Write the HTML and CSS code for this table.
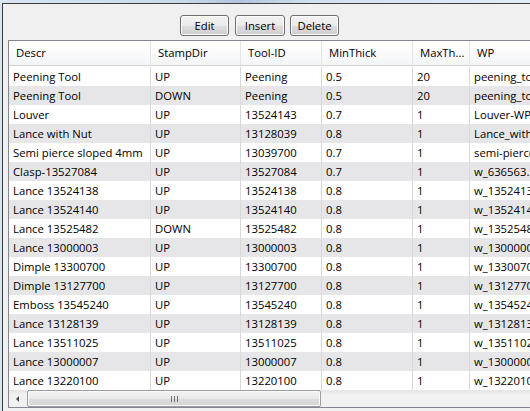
FILE: index.html
```html
<!DOCTYPE html>
<html>
<head>
<meta charset="utf-8">
<link rel="stylesheet" href="styles.css">
</head>
<body>
<div class="frame">
  <div class="panel">
    <div class="toolbar">
      <button class="btn btn-edit">Edit</button>
      <button class="btn btn-insert">Insert</button>
      <button class="btn btn-delete">Delete</button>
    </div>
    <div class="grid">
      <div class="row head">
        <div class="cell">Descr</div>
        <div class="cell">StampDir</div>
        <div class="cell">Tool-ID</div>
        <div class="cell">MinThick</div>
        <div class="cell">MaxTh...</div>
        <div class="cell">WP</div>
      </div>
      <div class="body">
        <div class="row"><div class="cell">Peening Tool</div><div class="cell">UP</div><div class="cell">Peening</div><div class="cell">0.5</div><div class="cell">20</div><div class="cell">peening_tool_wp</div></div>
        <div class="row alt"><div class="cell">Peening Tool</div><div class="cell">DOWN</div><div class="cell">Peening</div><div class="cell">0.5</div><div class="cell">20</div><div class="cell">peening_tool_wp</div></div>
        <div class="row"><div class="cell">Louver</div><div class="cell">UP</div><div class="cell">13524143</div><div class="cell">0.7</div><div class="cell">1</div><div class="cell">Louver-WP</div></div>
        <div class="row alt"><div class="cell">Lance with Nut</div><div class="cell">UP</div><div class="cell">13128039</div><div class="cell">0.8</div><div class="cell">1</div><div class="cell">Lance_with_nut</div></div>
        <div class="row"><div class="cell">Semi pierce sloped 4mm</div><div class="cell">UP</div><div class="cell">13039700</div><div class="cell">0.7</div><div class="cell">1</div><div class="cell">semi-pierce</div></div>
        <div class="row alt"><div class="cell">Clasp-13527084</div><div class="cell">UP</div><div class="cell">13527084</div><div class="cell">0.7</div><div class="cell">1</div><div class="cell">w_636563.stp</div></div>
        <div class="row"><div class="cell">Lance 13524138</div><div class="cell">UP</div><div class="cell">13524138</div><div class="cell">0.8</div><div class="cell">1</div><div class="cell">w_13524138</div></div>
        <div class="row alt"><div class="cell">Lance 13524140</div><div class="cell">UP</div><div class="cell">13524140</div><div class="cell">0.8</div><div class="cell">1</div><div class="cell">w_13524140</div></div>
        <div class="row"><div class="cell">Lance 13525482</div><div class="cell">DOWN</div><div class="cell">13525482</div><div class="cell">0.8</div><div class="cell">1</div><div class="cell">w_13525482</div></div>
        <div class="row alt"><div class="cell">Lance 13000003</div><div class="cell">UP</div><div class="cell">13000003</div><div class="cell">0.8</div><div class="cell">1</div><div class="cell">w_13000003</div></div>
        <div class="row"><div class="cell">Dimple 13300700</div><div class="cell">UP</div><div class="cell">13300700</div><div class="cell">0.8</div><div class="cell">1</div><div class="cell">w_13300700</div></div>
        <div class="row alt"><div class="cell">Dimple 13127700</div><div class="cell">UP</div><div class="cell">13127700</div><div class="cell">0.8</div><div class="cell">1</div><div class="cell">w_13127700</div></div>
        <div class="row"><div class="cell">Emboss 13545240</div><div class="cell">UP</div><div class="cell">13545240</div><div class="cell">0.8</div><div class="cell">1</div><div class="cell">w_13545240</div></div>
        <div class="row alt"><div class="cell">Lance 13128139</div><div class="cell">UP</div><div class="cell">13128139</div><div class="cell">0.8</div><div class="cell">1</div><div class="cell">w_13128139</div></div>
        <div class="row"><div class="cell">Lance 13511025</div><div class="cell">UP</div><div class="cell">13511025</div><div class="cell">0.8</div><div class="cell">1</div><div class="cell">w_13511025</div></div>
        <div class="row alt"><div class="cell">Lance 13000007</div><div class="cell">UP</div><div class="cell">13000007</div><div class="cell">0.8</div><div class="cell">1</div><div class="cell">w_13000007</div></div>
        <div class="row"><div class="cell">Lance 13220100</div><div class="cell">UP</div><div class="cell">13220100</div><div class="cell">0.8</div><div class="cell">1</div><div class="cell">w_13220100</div></div>
      </div>
      <div class="hscroll">
        <div class="sb-btn"><span class="arrow"></span></div>
        <div class="thumb"><span class="grip"></span></div>
        <div class="track"></div>
      </div>
    </div>
  </div>
</div>
</body>
</html>
```

FILE: styles.css
```css
* { box-sizing: border-box; }

html, body {
  margin: 0;
  padding: 0;
}

body {
  width: 530px;
  height: 411px;
  overflow: hidden;
  font-family: "Open Sans", "Noto Sans", sans-serif;
  font-size: 11.3px;
  color: #000;
  background: linear-gradient(90deg, #dbe5f1 0%, #c9d8ea 35%, #b0c4dc 45%, #d6e1ee 60%, #e3ebf4 100%);
}

.frame {
  height: 411px;
  padding: 3px 0 0 2px;
}

.panel {
  height: 100%;
  width: 600px;
  background: #f0f0f0;
  border-top: 1px solid #3d3d3d;
  border-left: 1px solid #3d3d3d;
  padding: 11px 0 0 5px;
}

.toolbar {
  display: flex;
  gap: 5px;
  padding-left: 172px;
  height: 21px;
}

.btn {
  height: 21px;
  margin: 0;
  padding: 0;
  font-family: inherit;
  font-size: 11.3px;
  color: #000;
  border: 1px solid #707070;
  border-radius: 3px;
  background: linear-gradient(#f2f2f2 0%, #ebebeb 50%, #dddddd 51%, #cfcfcf 100%);
  box-shadow: inset 0 0 0 1px #fcfcfc;
}

.btn-edit { width: 49px; }
.btn-insert { width: 50px; margin-left: 1px; }
.btn-delete { width: 49px; }

.grid {
  margin-top: 4px;
  width: 620px;
  border-top: 1px solid #828790;
  border-left: 1px solid #828790;
  border-bottom: 1px solid #828790;
  background: #fff;
}

.row {
  display: grid;
  grid-template-columns: 142px 90px 81px 91px 57px 159px;
  height: 19px;
}

.cell {
  border-right: 1px solid #d9d9d9;
  padding-left: 4px;
  white-space: nowrap;
  overflow: hidden;
  line-height: 19px;
}

.head {
  height: 25px;
  background: linear-gradient(#ffffff 0%, #fbfbfc 45%, #f3f4f6 100%);
  border-bottom: 1px solid #d5d5d5;
}

.head .cell {
  line-height: 24px;
  padding-left: 7px;
  border-right: 1px solid #e3e5e8;
}

.body {
  padding-top: 1px;
}

.alt {
  background: #e6e6e8;
}

.hscroll {
  display: flex;
  height: 17px;
  background: linear-gradient(#e4e4e4, #f2f2f2 30%, #f0f0f0);
}

.sb-btn {
  width: 18px;
  height: 17px;
  display: flex;
  align-items: center;
  justify-content: center;
}

.arrow {
  width: 0;
  height: 0;
  border-top: 3px solid transparent;
  border-bottom: 3px solid transparent;
  border-right: 3px solid #4d4d4d;
  margin-left: -2px;
}

.thumb {
  width: 294px;
  height: 17px;
  border: 1px solid #9c9c9c;
  border-radius: 2px;
  background: linear-gradient(#f3f3f3 0%, #e9e9e9 50%, #dcdcdc 51%, #d6d6d6 100%);
  box-shadow: inset 0 0 0 1px #fafafa;
  display: flex;
  align-items: center;
  justify-content: center;
}

.grip {
  width: 7px;
  height: 6px;
  background: repeating-linear-gradient(90deg, #6e6e6e 0 1px, transparent 1px 3px);
}

.track {
  flex: 1;
}
```
